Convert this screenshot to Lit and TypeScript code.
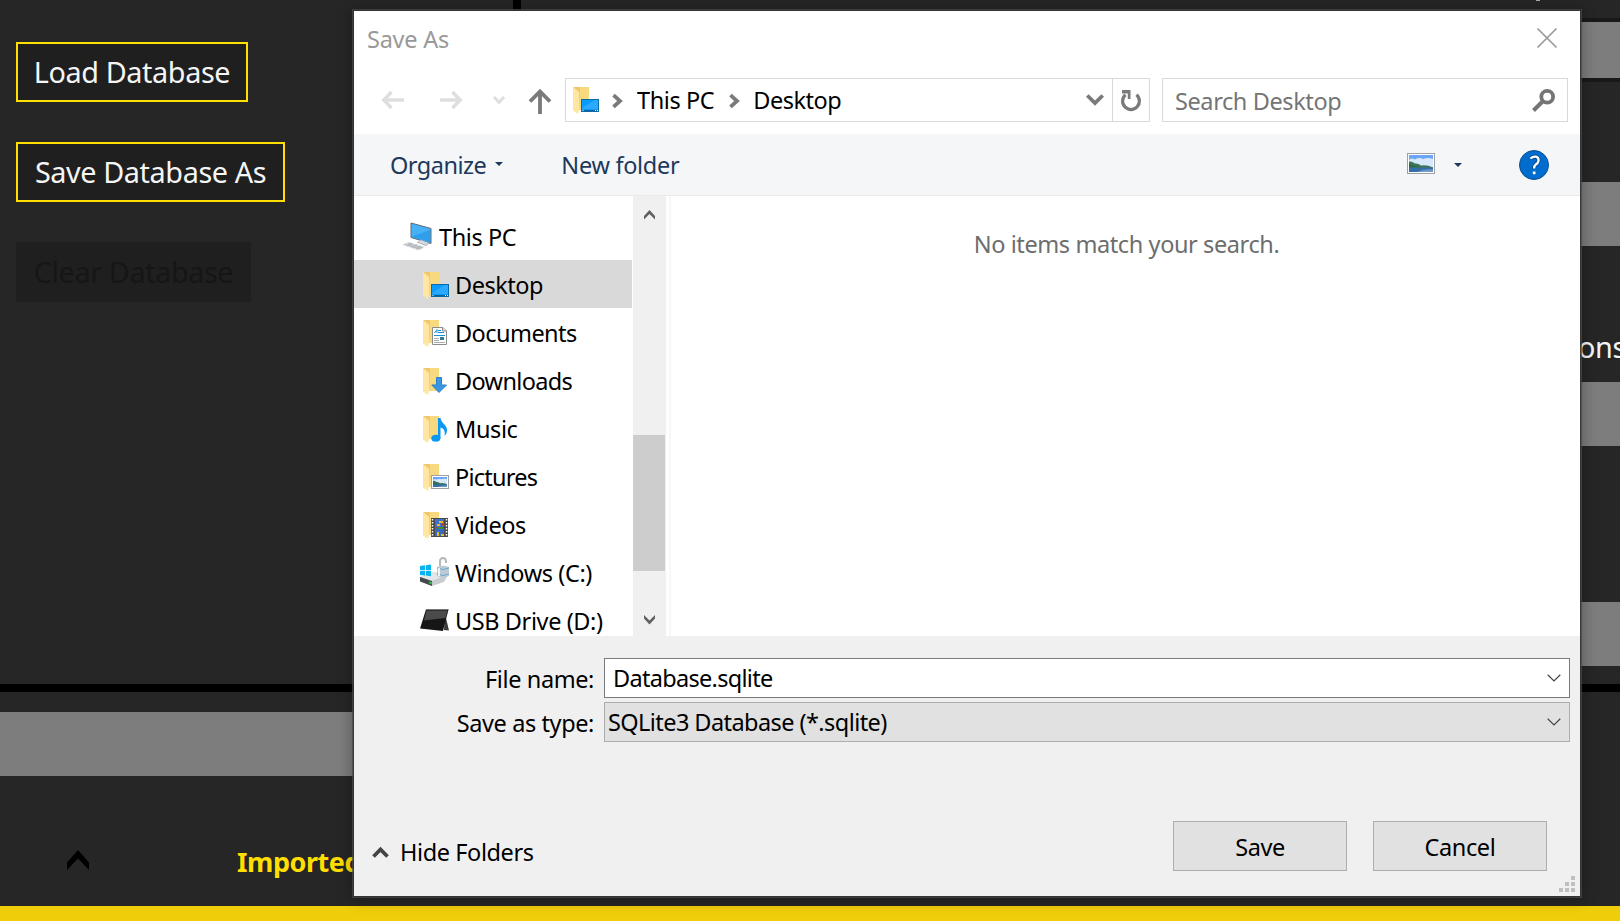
import { LitElement, html, svg, css } from "lit";
import { customElement } from "lit/decorators.js";

const folder = svg`
  <path d="M0 0H16V23H4Z" fill="#efc968"/>
  <path d="M7 0H16V23H6Z" fill="#f8d97f"/>
  <path d="M0 0L6 5V23L5 27L0 23.5Z" fill="#ffe7a3"/>`;

const scene = (x: number, y: number, w: number, h: number) => svg`
  <svg x=${x} y=${y} width=${w} height=${h} viewBox=${`0 0 ${w} ${h}`}>
    <rect x=".5" y=".5" width=${w - 1} height=${h - 1} fill="#fff" stroke="#a0a0a0"/>
    <svg x="2" y="2" width=${w - 4} height=${h - 4} viewBox="0 0 24 17" preserveAspectRatio="none">
      <rect width="24" height="17" fill="#6aa5f8"/>
      <path d="M0 5Q3 2.500 6 4.500Q10 2 14 4Q19 2 24 4V13H0Z" fill="#d6e8fa"/>
      <path d="M0 6.500Q3 6 6 8.500Q9 8 12 10.500Q18 9.500 24 12.500V13.500H0Z" fill="#3f7556"/>
      <path d="M0 9Q6 11 12 12.500H0Z" fill="#2f6a3e"/>
      <rect y="12.500" width="24" height="4.500" fill="#356ea6"/>
      <path d="M8 17Q15 13.500 24 14.500V17Z" fill="#6d9ac6"/>
    </svg>
  </svg>`;

const overlays: Record<string, unknown> = {
  desktop: svg`<rect x="8.500" y="12.500" width="17" height="12" fill="#0a9bff" stroke="#0a6aa8"/>
    <path d="M9 21L22 13H25V22H9Z" fill="#2aa9ff"/>
    <path d="M9 23.500H25" stroke="#0a5f9c"/><path d="M9.500 23.500h1M22 23.500h1M24 23.500h1" stroke="#fff"/>`,
  documents: svg`<path d="M9.500 7.500H20L23.500 11V24.500H9.500Z" fill="#fff" stroke="#8c8c8c"/>
    <path d="M19.500 7.500V11H23.500" fill="#ddd" stroke="#8c8c8c"/>
    <path d="M11.500 13L14 9.500V13M15 10.500H18M15 12.500H21M11 15.500H22" stroke="#1a92d8" fill="none"/>
    <path d="M11 18.500H16M11 20.500H16M11 22.500H22" stroke="#aaa"/><rect x="17" y="17" width="4" height="3" fill="#2d7d9a"/>`,
  downloads: svg`<path d="M13.500 9.500H18.500V17H23.500L16 24.500L8.800 17H13.500Z" fill="#3a96e0" stroke="#2b80c8"/>`,
  music: svg`<ellipse cx="12.800" cy="22.300" rx="4.500" ry="3.500" fill="#0a98f5"/>
    <path d="M15 2H17.500C18 7 24 9 24 14C24 17 23 18.500 21.500 20C22.500 15 21 12.500 17.500 11.500V23H15Z" fill="#0a98f5"/>`,
  pictures: scene(8, 11, 18, 14),
  videos: svg`<rect x="8" y="6" width="17" height="19" fill="#4a4a4a"/>
    <rect x="12" y="7" width="9" height="8" fill="#3e71cd"/><rect x="12" y="16" width="9" height="8" fill="#3768c6"/>
    <path d="M16 9h4v2h-4zM14 12h3v2h-3zM14 20h2v4h-2zM18 22h3v2h-3z" fill="#e9bd1d"/>
    <path d="M12 15h5v1h-5zM18 11h2v3h-2z" fill="#c73838"/><path d="M15 15h5v2h-5z" fill="#3a8e36"/>
    <path d="M9.500 7V25M23.500 7V25" stroke="#fff" stroke-width="1.500" stroke-dasharray="1.500 1.500"/>`,
};

const folderIcon = (kind: string) => html`
  <svg class="ico" width="30" height="30" viewBox="0 0 30 30">
    <g transform="translate(3 2)">${folder}${overlays[kind]}</g>
  </svg>`;

const pcIcon = html`<svg class="ico" width="30" height="30" viewBox="0 0 30 30">
  <path d="M9 1L29 6.500V21.500L9 15.500Z" fill="#46b2f5" stroke="#5a6b78"/>
  <path d="M10 14.500L28 8V20L10 15Z" fill="#2f9fec"/>
  <path d="M15 20L19 18L27 21L24 23.500Z" fill="#d4d9dd"/><path d="M15 20L24 23.500L27 21" fill="none" stroke="#98a2aa" stroke-width=".8"/>
  <path d="M0 22.500L7 20L23 25L16 28.500Z" fill="#d9dcdf"/>
  <path d="M3 22.500L19 27M6 21.500L21 26M5 24L10 21M10 25.500L15 22.500M14 27L19 24" stroke="#a5abb0" stroke-width=".8"/>
</svg>`;

const driveIcon = html`<svg class="ico" width="30" height="30" viewBox="0 0 30 30">
  <path d="M0 19L12 14.500L29 15L24 24L12 28L0 23Z" fill="#c9cdd0"/>
  <path d="M0 19L12 15L27 17L12 23Z" fill="#e4e6e8"/>
  <path d="M0 19L12 23V28L0 23.500Z" fill="#444a4c"/><path d="M9 24.200L12 25.200" stroke="#25c13b" stroke-width="2"/>
  <path d="M0 8L5 7.300V12.200H0ZM5.800 7.200L11 6.500V12.200H5.800ZM0 13H5V17.500L0 17ZM5.800 13H11V18.300L5.800 17.600Z" fill="#0ab4ef"/>
  <path d="M20 8V3.500Q20 0 23 0Q26 0 26 3.500V5" fill="none" stroke="#b4babe" stroke-width="2"/>
  <path d="M17 9Q23 6.500 29 9V18Q23 21 17 18Z" fill="#bdcbd5"/>
  <path d="M17 10Q23 13 29 10M17 16Q23 19 29 16" stroke="#6aa7c8" fill="none"/><path d="M19 10V18" stroke="#edf2f5" stroke-width="2"/>
</svg>`;

const usbIcon = html`<svg class="ico" width="30" height="30" viewBox="0 0 30 30">
  <path d="M25 8L29 24.500L24 24Z" fill="#3b3b3b"/>
  <path d="M6 3.500H28.500L23 25L0 22.500Z" fill="#161616"/>
  <path d="M6.500 4.500H27.500L25.500 12L4 14.500Z" fill="#4b4b4b"/>
  <path d="M6 3.500H28.500" stroke="#777"/>
</svg>`;

const places: [string, unknown, string][] = [
  ["Desktop", folderIcon("desktop"), "t-desktop"],
  ["Documents", folderIcon("documents"), "t-documents"],
  ["Downloads", folderIcon("downloads"), "t-downloads"],
  ["Music", folderIcon("music"), "t-music"],
  ["Pictures", folderIcon("pictures"), "t-pictures"],
  ["Videos", folderIcon("videos"), "t-videos"],
  ["Windows (C:)", driveIcon, "t-windows"],
  ["USB Drive (D:)", usbIcon, "t-usb"],
];

const thinChevron = html`<svg width="14" height="8" viewBox="0 0 14 8"><path d="M.7 .8L7 7L13.300 .8" fill="none" stroke="#444" stroke-width="1.200"/></svg>`;

@customElement("save-dialog")
class SaveDialog extends LitElement {
  static styles = css`
    :host { display: flex; flex-direction: column; background: #fff; color: #000; font-size: 23.5px; letter-spacing: -.4px; white-space: nowrap; }
    svg { display: block; flex: none; overflow: visible; }
    .title { height: 67px; flex: none; display: flex; justify-content: space-between; padding: 0 23px 0 13px; color: #999; line-height: 56px; }
    .title svg { margin-top: 17px; }
    .t-title { letter-spacing: -.25px; }
    .t-desktop { letter-spacing: -.5px; }
    .t-documents { letter-spacing: -.55px; }
    .t-downloads { letter-spacing: -.65px; }
    .t-pictures { letter-spacing: -.75px; }
    .t-new { letter-spacing: -.3px; }
    .t-file { letter-spacing: -.7px; }
    .t-type { letter-spacing: -.57px; }
    .t-organize { letter-spacing: -.5px; }
    .nav { height: 44px; flex: none; display: flex; align-items: center; padding: 0 12px 0 28px; margin-bottom: 12px; }
    .nav .fwd { margin-left: 36px; } .nav .hist { margin-left: 31px; } .nav .up { margin: 3px 14px 0 24px; }
    .addr { box-sizing: border-box; width: 585px; height: 44px; border: 1px solid #d9d9d9; display: flex; align-items: center; }
    .addr .ico { margin: 0 0 0 4px; }
    .addr .c1 { margin: 2px 14px 0 12px; }
    .addr .c2 { margin: 2px 13px 0 15px; }
    .addr .drop { margin-left: auto; }
    .refresh { box-sizing: border-box; margin-left: 8px; width: 37px; height: 42px; border-left: 1px solid #d9d9d9; display: grid; place-items: center; }
    .search { box-sizing: border-box; margin-left: 12px; width: 406px; height: 44px; border: 1px solid #d9d9d9; display: flex; align-items: center; justify-content: space-between; padding: 0 12px 0 12px; color: #757575; }
    .search span { padding-top: 2px; }
    .tools { box-sizing: border-box; height: 62px; flex: none; background: #f5f6f7; border-bottom: 1px solid #e8e9ea; display: flex; align-items: center; padding: 0 31px 0 36px; color: #1e395b; }
    .tools .caret { margin: -1px 0 0 9px; }
    .tools .new { margin-left: 58px; }
    .tools .view { margin: 0 0 2px auto; }
    .tools .caret2 { margin: 0 57px 0 19px; }
    .body { height: 440px; flex: none; display: flex; overflow: hidden; }
    .tree { width: 278px; padding-top: 16px; margin-right: 1px; }
    .row { height: 48px; display: flex; align-items: center; padding-left: 66px; }
    .row.root { padding-left: 48px; }
    .row .ico { margin: 2px 0 0; }
    .row span { margin: 2px 0 0 5px; }
    .row.root span { margin-left: 7px; }
    .row.sel { background: #d9d9d9; }
    .bar { width: 33px; background: #f0f0f0; display: flex; flex-direction: column; }
    .bar .a { margin: 14px 0 0 11px; }
    .bar .thumb { width: 32px; height: 136px; background: #cdcdcd; margin-top: 216px; }
    .bar .b { margin: 44px 0 0 11px; }
    .files { flex: 1; margin-left: 3px; border-left: 2px solid #f7f7f7; text-align: center; color: #6d6d6d; padding: 28px 0 0 2px; line-height: 40px; }
    .foot { flex: 1; background: #f0f0f0; display: flex; flex-direction: column; padding-top: 22px; }
    .field { display: flex; height: 40px; margin: 0 10px 4px 0; }
    .field label { width: 240px; text-align: right; line-height: 42px; margin-right: 10px; }
    .box { box-sizing: border-box; flex: 1; border: 1px solid #7a7a7a; background: #fff; display: flex; justify-content: space-between; align-items: center; padding: 0 8px 0 8px; line-height: 38px; }
    .box.sel { border-color: #adadad; background: #e1e1e1; padding-left: 3px; }
    .actions { display: flex; height: 50px; margin-top: 75px; padding-right: 33px; }
    .hide { display: flex; align-items: center; height: 62px; padding-left: 18px; margin-right: auto; }
    .hide svg { margin-right: 11px; }
    .btn { box-sizing: border-box; width: 174px; height: 50px; border: 1px solid #adadad; background: #e1e1e1; text-align: center; line-height: 51px; margin-left: 26px; }
    .grip { align-self: flex-end; margin: 5px 5px 0 0; height: 16px; }
  `;

  render() {
    return html`
      <div class="title"><span class="t-title">Save As</span>
        <svg width="20" height="20" viewBox="0 0 20 20"><path d="M.5 .5L19.500 19.500M19.500 .5L.5 19.500" stroke="#999" stroke-width="1.700"/></svg>
      </div>
      <div class="nav">
        <svg width="22" height="18" viewBox="0 0 22 18"><path d="M22 9H2M9.500 1L1.800 9L9.500 17" fill="none" stroke="#dedede" stroke-width="3.400"/></svg>
        <svg class="fwd" width="22" height="18" viewBox="0 0 22 18"><path d="M0 9H20M12.500 1L20.200 9L12.500 17" fill="none" stroke="#dedede" stroke-width="3.400"/></svg>
        <svg class="hist" width="12" height="8" viewBox="0 0 12 8"><path d="M1 1L6 6.300L11 1" fill="none" stroke="#dedede" stroke-width="3"/></svg>
        <svg class="up" width="22" height="25" viewBox="0 0 22 25"><path d="M11 25V2.500M1 12.500L11 2.500L21 12.500" fill="none" stroke="#7a7a7a" stroke-width="3.800"/></svg>
        <div class="addr">${folderIcon("desktop")}
          <svg class="c1" width="11" height="14" viewBox="0 0 11 14"><path d="M1.500 1.200L8 7L1.500 12.800" fill="none" stroke="#7a7a7a" stroke-width="3.800"/></svg>
          <span class="t-pc">This PC</span>
          <svg class="c2" width="11" height="14" viewBox="0 0 11 14"><path d="M1.500 1.200L8 7L1.500 12.800" fill="none" stroke="#7a7a7a" stroke-width="3.800"/></svg>
          <span class="t-desktop">Desktop</span>
          <svg class="drop" width="18" height="12" viewBox="0 0 18 12"><path d="M1.300 1.500L9 9L16.700 1.500" fill="none" stroke="#7a7a7a" stroke-width="3.800"/></svg>
          <div class="refresh"><svg width="20" height="21" viewBox="0 0 20 21">
            <path d="M15.500 4.800A8.400 8.400 0 1 1 4.500 4.800" fill="none" stroke="#7a7a7a" stroke-width="3.200"/>
            <path d="M1 0H9.500V9H6.800V3.500H1Z" fill="#7a7a7a"/></svg></div>
        </div>
        <div class="search"><span class="t-search">Search Desktop</span>
          <svg width="23" height="23" viewBox="0 0 23 23"><circle cx="15.200" cy="7.800" r="5.900" fill="none" stroke="#757575" stroke-width="3.800"/><path d="M11 12L1.500 21.500" stroke="#757575" stroke-width="4"/></svg>
        </div>
      </div>
      <div class="tools"><span class="t-organize">Organize</span>
        <svg class="caret" width="8" height="4" viewBox="0 0 8 4"><path d="M0 0H8L4 4Z" fill="#1e395b"/></svg>
        <span class="new t-new">New folder</span>
        <svg class="view" width="28" height="21">${scene(0, 0, 28, 21)}</svg>
        <svg class="caret2" width="8" height="4" viewBox="0 0 8 4"><path d="M0 0H8L4 4Z" fill="#1e395b"/></svg>
        <svg width="30" height="30" viewBox="0 0 30 30"><circle cx="15" cy="15" r="14.500" fill="#006cce" stroke="#0a4f8e"/>
          <path d="M11.300 8.500Q14 6.300 17 6.700Q20 7.300 19.500 11Q19.200 13 16.800 14.500Q15 15.800 15.200 18.500" fill="none" stroke="#004c91" stroke-width="4"/>
          <path d="M11.300 8.500Q14 6.300 17 6.700Q20 7.300 19.500 11Q19.200 13 16.800 14.500Q15 15.800 15.200 18.500" fill="none" stroke="#fff" stroke-width="2.200"/><rect x="13.800" y="21.500" width="2.700" height="2.700" fill="#fff"/></svg>
      </div>
      <div class="body">
        <div class="tree">
          <div class="row root">${pcIcon}<span class="t-pc">This PC</span></div>
          ${places.map(([name, icon, cls], i) => html`<div class="row ${i === 0 ? "sel" : ""}">${icon}<span class=${cls}>${name}</span></div>`)}
        </div>
        <div class="bar">
          <svg class="a" width="11" height="9" viewBox="0 0 11 9"><path d="M0 6L5.500 0L11 6V9.500L5.500 4L0 9.500Z" fill="#606060"/></svg>
          <div class="thumb"></div>
          <svg class="b" width="11" height="9" viewBox="0 0 11 9"><path d="M0 3.500L5.500 9.500L11 3.500V0L5.500 5.500L0 0Z" fill="#606060"/></svg>
        </div>
        <div class="files"><span class="t-empty">No items match your search.</span></div>
      </div>
      <div class="foot">
        <div class="field"><label>File name:</label><div class="box"><span class="t-file">Database.sqlite</span>${thinChevron}</div></div>
        <div class="field"><label>Save as type:</label><div class="box sel"><span class="t-type">SQLite3 Database (*.sqlite)</span>${thinChevron}</div></div>
        <div class="actions">
          <div class="hide"><svg width="17" height="11" viewBox="0 0 17 11"><path d="M1.500 9.500L8.500 2.500L15.500 9.500" fill="none" stroke="#444" stroke-width="3.800"/></svg><span class="t-hide">Hide Folders</span></div>
          <div class="btn">Save</div><div class="btn">Cancel</div>
        </div>
        <svg class="grip" width="16" height="16" viewBox="0 0 16 16"><path d="M12 0h4v4h-4zM6 6h4v4h-4zM12 6h4v4h-4zM0 12h4v4h-4zM6 12h4v4h-4zM12 12h4v4h-4z" fill="#bfbfbf"/></svg>
      </div>`;
  }
}

@customElement("app-root")
class AppRoot extends LitElement {
  static styles = css`
    :host { display: block; position: relative; width: 1620px; height: 921px; overflow: hidden; background: #262626; font-family: "Noto Sans", "Open Sans", sans-serif; }
    .page { height: 921px; display: flex; flex-direction: column; }
    .top { height: 684px; display: flex; }
    .left { box-sizing: border-box; width: 513px; padding: 42px 16px 0; display: flex; flex-direction: column; align-items: flex-start; gap: 40px; }
    .cmd { box-sizing: border-box; height: 60px; border: 2px solid #ffde00; background: #1f1f1f; color: #f5f5f5; font-size: 28.8px; line-height: 56px; letter-spacing: -.4px; text-align: center; white-space: nowrap; }
    .w1 { width: 232px; } .w2 { width: 269px; } .w3 { width: 235px; }
    .cmd.off { border-color: #1f1f1f; color: #161616; }
    .rule { background: #000; width: 8px; }
    .right { flex: 1; display: flex; flex-direction: column; align-items: flex-end; }
    .tail { width: 4px; height: 1px; background: #aaa; margin-right: 80px; }
    .strip { width: 100%; height: 64px; background: #7d7d7d; flex: none; }
    .strip.edge { box-sizing: border-box; border: solid #191919; border-width: 4px 0; margin-top: 17px; margin-bottom: 100px; }
    .caption { height: 136px; width: 42px; color: #f5f5f5; font-size: 28.8px; line-height: 202px; letter-spacing: -.4px; }
    .gap { height: 156px; flex: none; }
    .hr { height: 8px; background: #000; flex: none; }
    .bottom { height: 214px; padding-top: 20px; box-sizing: border-box; }
    .bottom .strip { width: 1500px; }
    .head { display: flex; align-items: center; padding: 64px 0 0 67px; color: #ffde00; font-size: 27px; font-weight: 700; line-height: 44px; letter-spacing: -.45px; }
    .head svg { margin: 0 148px 4px 0; }
    .status { height: 15px; background: #f0cd0a; }
    save-dialog { position: absolute; left: 354px; top: 11px; width: 1226px; height: 885px; box-shadow: 0 0 0 1px rgba(45,43,42,.6), 0 0 0 2px rgba(75,73,72,.75), 0 1px 14px 2px rgba(0,0,0,.3); }
  `;

  render() {
    return html`
      <div class="page">
        <div class="top">
          <div class="left">
            <div class="cmd w1">Load Database</div>
            <div class="cmd w2">Save Database As</div>
            <div class="cmd w3 off">Clear Database</div>
          </div>
          <div class="rule"></div>
          <div class="right">
            <div class="tail"></div>
            <div class="strip edge"></div>
            <div class="strip"></div>
            <div class="caption">ons</div>
            <div class="strip"></div>
            <div class="gap"></div>
            <div class="strip"></div>
          </div>
        </div>
        <div class="hr"></div>
        <div class="bottom">
          <div class="strip"></div>
          <div class="head"><svg width="22" height="20" viewBox="0 0 22 20"><path d="M0 12.500L11 0L22 12.500V20L11 8.500L0 20Z" fill="#000"/></svg>Imported</div>
        </div>
        <div class="status"></div>
      </div>
      <save-dialog></save-dialog>`;
  }
}
